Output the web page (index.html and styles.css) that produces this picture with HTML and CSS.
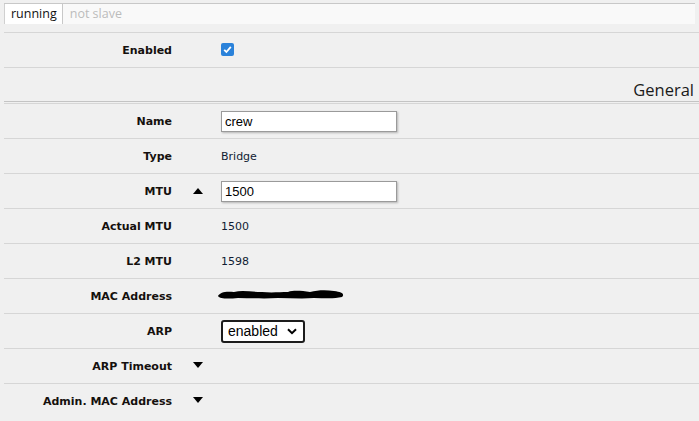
FILE: index.html
```html
<!DOCTYPE html>
<html lang="en">
<head>
    <meta charset="UTF-8">
    <title>Bridge - crew</title>
    <link rel="stylesheet" href="styles.css">
</head>
<body>
    <div class="page">
        <div class="tabs">
            <span class="tab active">running</span>
            <span class="tab">not slave</span>
        </div>

        <div class="row">
            <div class="label">Enabled</div>
            <div class="icon"></div>
            <div class="value">
                <span class="checkbox">
                    <svg width="13" height="13" viewBox="0 0 13 13"><path d="M3.2 6.8 L5.4 9 L9.8 3.8" fill="none" stroke="#fff" stroke-width="1.8"/></svg>
                </span>
            </div>
        </div>

        <div class="section">General</div>

        <div class="row">
            <div class="label">Name</div>
            <div class="icon"></div>
            <div class="value"><input class="text" type="text" value="crew"></div>
        </div>
        <div class="row">
            <div class="label">Type</div>
            <div class="icon"></div>
            <div class="value">Bridge</div>
        </div>
        <div class="row">
            <div class="label">MTU</div>
            <div class="icon"><span class="arrow up"></span></div>
            <div class="value"><input class="text" type="text" value="1500"></div>
        </div>
        <div class="row">
            <div class="label">Actual MTU</div>
            <div class="icon"></div>
            <div class="value">1500</div>
        </div>
        <div class="row">
            <div class="label">L2 MTU</div>
            <div class="icon"></div>
            <div class="value">1598</div>
        </div>
        <div class="row">
            <div class="label">MAC Address</div>
            <div class="icon"></div>
            <div class="value">
                <!-- redacted -->
                <svg class="redact" width="130" height="14" viewBox="0 0 130 14"><path d="M2 8 C4 4 10 3 18 4 C26 2 36 4 46 4 C56 5 64 4 72 4 C78 2 86 3 94 4 C102 2 110 2 118 3 C126 4 129 6 126 9 C118 11 108 10 98 10 C86 11 74 10 62 10 C48 11 34 10 22 10 C12 11 4 11 2 8 Z" fill="#000"/></svg>
            </div>
        </div>
        <div class="row">
            <div class="label">ARP</div>
            <div class="icon"></div>
            <div class="value">
                <div class="select-wrap">
                    <select class="select">
                        <option>enabled</option>
                        <option>disabled</option>
                        <option>proxy-arp</option>
                        <option>reply-only</option>
                    </select>
                    <svg class="chevron" width="10" height="7" viewBox="0 0 10 7"><path d="M1 1.2 L5 5.2 L9 1.2" fill="none" stroke="#000" stroke-width="2"/></svg>
                </div>
            </div>
        </div>
        <div class="row">
            <div class="label">ARP Timeout</div>
            <div class="icon"><span class="arrow down"></span></div>
            <div class="value"></div>
        </div>
        <div class="row">
            <div class="label">Admin. MAC Address</div>
            <div class="icon"><span class="arrow down"></span></div>
            <div class="value"></div>
        </div>
    </div>
</body>
</html>
```

FILE: styles.css
```css
body {
    margin: 0;
    background: #f0f0f0;
    font-family: "DejaVu Sans", Verdana, sans-serif;
    font-size: 11px;
    color: #101c33;
}
.page {
    padding: 3px 0 0 4px;
}

/* tabs */
.tabs {
    display: flex;
    height: 20px;
    border-top: 1px solid #c8c8c8;
    background: #f9f9f9;
    margin-right: 4px;
    margin-bottom: 8px;
}
.tab {
    padding: 0 7px;
    line-height: 20px;
    font-family: "Open Sans", "Noto Sans", sans-serif;
    font-size: 12.5px;
    color: #bcbcbc;
}
.tab.active {
    background: #fff;
    color: #111;
    border-left: 1px solid #d0d0d0;
    border-right: 1px solid #c8c8c8;
    padding: 0 5px 0 6px;
}

/* rows */
.row {
    display: grid;
    grid-template-columns: 168px 49px 1fr;
    align-items: center;
    height: 34px;
    border-top: 1px solid #d6d6d6;
}
.label {
    text-align: right;
    font-weight: bold;
    color: #15100e;
}
.icon {
    padding-left: 21px;
    display: flex;
}
.value {
    display: flex;
    align-items: center;
}

.section {
    border-top: 1px solid #d6d6d6;
    border-bottom: 1px solid #c4c4c4;
    height: 33px;
    padding-right: 5px;
    text-align: right;
    font-family: "Open Sans", "Noto Sans", sans-serif;
    font-size: 16.5px;
    line-height: 43px;
    color: #1a1a1a;
    margin-bottom: 1px;
}

.checkbox {
    display: block;
    width: 13px;
    height: 13px;
    border-radius: 2px;
    background: #2a82da;
    margin-top: -1px;
}
.checkbox svg {
    display: block;
}

.text {
    box-sizing: border-box;
    width: 176px;
    height: 21px;
    margin: 0;
    padding: 0 3px;
    border: 1px solid #9a9a9a;
    box-shadow: 1px 1px 2px rgba(0, 0, 0, 0.25);
    background: #fff;
    font-family: "Liberation Sans", Arial, sans-serif;
    font-size: 13px;
    color: #000;
}

.arrow {
    width: 0;
    height: 0;
    border-left: 5px solid transparent;
    border-right: 5px solid transparent;
}
.arrow.up {
    border-bottom: 6px solid #000;
    margin-top: -1px;
}
.arrow.down {
    border-top: 6px solid #000;
    margin-top: -2px;
}

.redact {
    display: block;
    margin-left: -5px;
    margin-top: -2px;
}

.select-wrap {
    position: relative;
    display: inline-block;
}
.select {
    appearance: none;
    -webkit-appearance: none;
    box-sizing: border-box;
    width: 84px;
    height: 23px;
    margin: 0;
    padding: 0 0 0 5px;
    border: 2px solid #1c1c1c;
    border-radius: 3px;
    background: #fff;
    font-family: "Liberation Sans", Arial, sans-serif;
    font-size: 14px;
    color: #000;
}
.chevron {
    position: absolute;
    right: 8px;
    top: 8px;
    pointer-events: none;
}
```
